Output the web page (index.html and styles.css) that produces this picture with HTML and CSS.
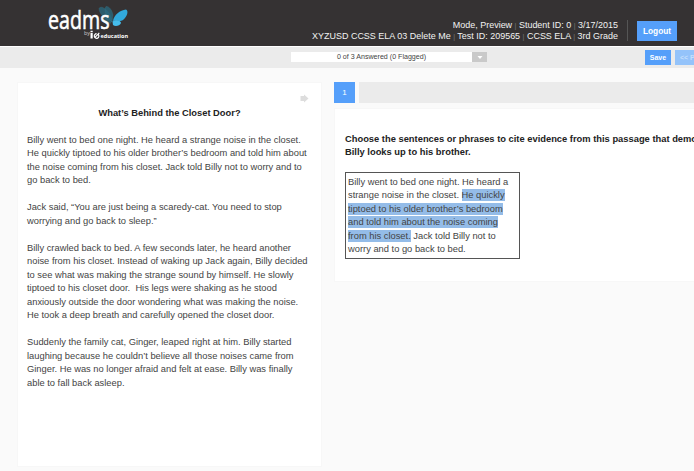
FILE: index.html
```html
<!DOCTYPE html>
<html lang="en">
<head>
<meta charset="utf-8">
<title>eadms</title>
<link rel="stylesheet" href="styles.css">
</head>
<body>
<header class="header">
  <svg class="logo" width="90" height="42" viewBox="0 0 90 42" role="img" aria-label="eadms by io education">
    <g class="wings">
      <path class="wing-back" d="M71 22C65 20 58 14 58 8.500C59 6.500 62 7 64 9C68 12 71 17 71 22Z"/>
      <path class="wing-back" d="M71 22C66 18 62 9 65 6.500C68 6 71 10 72 15Z"/>
      <path class="wing-back" d="M70 23C66 24 63 22 61 19C64 17 68 19 70 23Z"/>
      <path class="wing-front" d="M72 21C73 15 79 10 85 9.500C88 11 86 17 82 20C79 22 75 20 72 21Z"/>
      <path class="wing-front wing-low" d="M71.500 21.500C75 19 80 21 80 23C79 26 74 27 72 25Z"/>
    </g>
    <text class="brand" x="7" y="28.800" textLength="61.500" lengthAdjust="spacingAndGlyphs">eadms</text>
    <text class="by" x="43" y="34.500">by</text>
    <path class="io" d="M49.500 33h2.200v5.500h-2.200zM49.500 30.800h2.200v1.500h-2.200z"/>
    <path class="ring" d="M57.400 34.600A2.300 2.300 0 1 1 55.600 33.700M54 37.300L58.300 32.800"/>
    <text class="edu" x="59.500" y="38.200" textLength="27.500" lengthAdjust="spacingAndGlyphs">education</text>
  </svg>
  <div class="info">
    <div class="row">Mode, Preview <i>|</i> Student ID: 0 <i>|</i> 3/17/2015</div>
    <div class="row">XYZUSD CCSS ELA 03 Delete Me <i>|</i> Test ID: 209565 <i>|</i> CCSS ELA <i>|</i> 3rd Grade</div>
  </div>
  <div class="divider"></div>
  <button class="btn logout">Logout</button>
</header>
<div class="toolbar">
  <div class="select"><span class="value">0 of 3 Answered (0 Flagged)</span><span class="caret"><svg width="6" height="3" viewBox="0 0 6 3"><path d="M0.500 0h5L3 3z" fill="#fff"/></svg></span></div>
  <button class="btn save">Save</button>
  <button class="btn prev">&lt;&lt; Prev</button>
</div>
<main class="main">
  <section class="card passage">
    <svg class="arrow" width="9" height="9" viewBox="0 0 9 9"><path d="M0.500 2H4V0.500L8.500 4.500L4 8.500V7H0.500z" fill="#ddd"/></svg>
    <h1 class="title">What’s Behind the Closet Door?</h1>
    <p>Billy went to bed one night. He heard a strange noise in the closet.<br>He quickly tiptoed to his older brother’s bedroom and told him about<br>the noise coming from his closet. Jack told Billy not to worry and to<br>go back to bed.</p>
    <p>Jack said, “You are just being a scaredy-cat. You need to stop<br>worrying and go back to sleep.”</p>
    <p>Billy crawled back to bed. A few seconds later, he heard another<br>noise from his closet. Instead of waking up Jack again, Billy decided<br>to see what was making the strange sound by himself. He slowly<br>tiptoed to his closet door.&nbsp; His legs were shaking as he stood<br>anxiously outside the door wondering what was making the noise.<br>He took a deep breath and carefully opened the closet door.</p>
    <p>Suddenly the family cat, Ginger, leaped right at him. Billy started<br>laughing because he couldn’t believe all those noises came from<br>Ginger. He was no longer afraid and felt at ease. Billy was finally<br>able to fall back asleep.</p>
  </section>
  <div class="question">
    <div class="tabs"><span class="tab">1</span><span class="track"></span></div>
    <section class="card prompt">
      <h2 class="ask">Choose the sentences or phrases to cite evidence from this passage that demonstrates<br>Billy looks up to his brother.</h2>
      <div class="answer">Billy went to bed one night. He heard a<br>strange noise in the closet. <mark>He quickly<br>tiptoed to his older brother’s bedroom<br>and told him about the noise coming<br>from his closet.</mark> Jack told Billy not to<br>worry and to go back to bed.</div>
    </section>
  </div>
</main>
</body>
</html>
```
FILE: styles.css
```css
* { box-sizing: border-box; }
body {
  margin: 0;
  width: 694px;
  height: 471px;
  overflow: hidden;
  background: #fafafa;
  color: #444;
  font: 9.33px/13.5px "Liberation Sans", Arial, sans-serif;
}
.header {
  height: 46px;
  display: flex;
  background: #353233;
  color: #f2f2f2;
}
.logo { margin-left: 41px; flex: none; }
.wing-back { fill: #286a80; stroke: #397f95; stroke-width: .4; opacity: .75; }
.wing-front { fill: #31a9dc; }
.wing-low { fill: #45bdec; }
.brand { font: 25px "Open Sans", sans-serif; fill: #fff; stroke: #fff; stroke-width: .6; }
.by { font: 5.5px "Open Sans", sans-serif; fill: #ccc; }
.edu { font: bold 6px "Open Sans", sans-serif; fill: #fff; }
.io { fill: #fff; }
.ring { fill: none; stroke: #fff; stroke-width: 1.2; }
.info {
  margin-left: auto;
  padding-top: 20px;
  text-align: right;
  white-space: nowrap;
  font-size: 8.97px;
  line-height: 11px;
}
.info i { font-style: normal; color: #777; font-size: 7px; }
.divider { width: 1px; height: 21px; margin: 20px 9px 0 9px; background: #555; }
.btn {
  border: 0;
  padding: 0;
  background: #559ffa;
  color: #fff;
  font-family: inherit;
  font-weight: bold;
}
.logout { width: 40px; height: 20px; margin: 21px 17px 0 0; font-size: 8.3px; }
.toolbar {
  height: 22px;
  display: flex;
  background: #ebebeb;
  border-top: 1px solid #fff;
  overflow: hidden;
}
.select { display: flex; flex: none; width: 196px; height: 10px; margin: 5px 0 0 291px; background: #fff; }
.value { flex: 1; text-align: center; font-size: 7.1px; line-height: 11px; white-space: nowrap; }
.caret { width: 15px; background: #c9c9c9; display: flex; align-items: center; justify-content: center; }
.save { width: 26px; height: 15px; margin: 3px 4px 0 158px; font-size: 7px; flex: none; }
.prev { width: 36px; height: 15px; margin-top: 3px; font-size: 7px; flex: none; background: #94c3fa; color: #c5dffc; text-align: left; padding-left: 5px; }
.main { display: flex; align-items: flex-start; padding: 14px 0 0 17px; overflow: hidden; }
.card { background: #fff; border: 1px solid #f7f7f7; }
.passage { width: 305px; height: 385px; padding: 11px 0 0 9px; flex: none; white-space: nowrap; }
.arrow { display: block; margin-left: 273px; }
.title { margin: 3.5px 9px 13.5px 0; font-size: 9.33px; line-height: 13.5px; text-align: center; color: #222; }
.passage p { margin: 0 0 13.5px; }
.question { margin-left: 12px; flex: none; width: 420px; }
.tabs { display: flex; height: 21px; gap: 4px; }
.tab { width: 21px; background: #559ffa; color: #fff; font-size: 8px; line-height: 21px; text-align: center; }
.track { flex: 1; background: #ebebeb; }
.prompt { margin-top: 5px; height: 174px; padding: 23.5px 0 0 10px; white-space: nowrap; }
.ask { margin: 0 0 12.5px; font-size: 9.35px; line-height: 13.5px; color: #222; }
.answer { width: 175px; height: 87px; border: 1px solid #555; padding: 2.5px 2px; }
mark { background: #94bce8; color: inherit; padding: 1px 0; }
```
